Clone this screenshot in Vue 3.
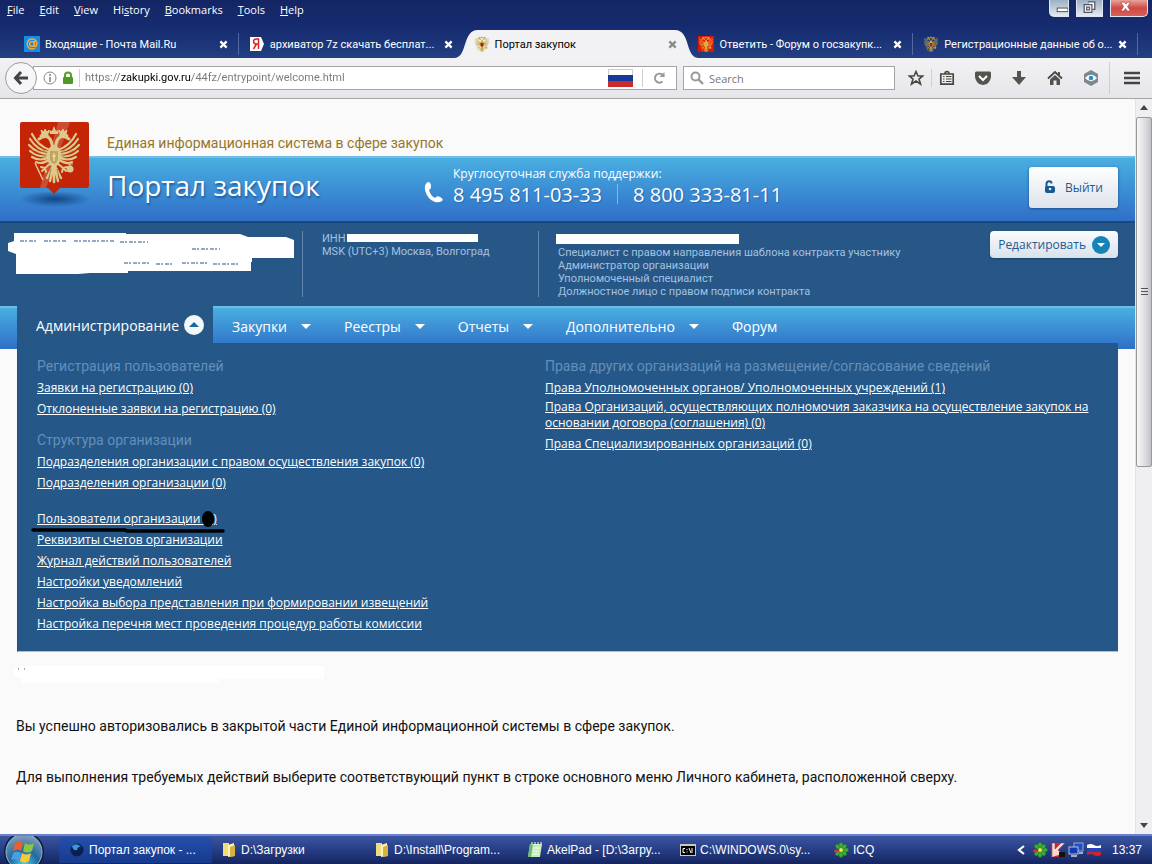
<script setup>
import { ref } from 'vue'

const menus = ['File', 'Edit', 'View', 'History', 'Bookmarks', 'Tools', 'Help']
const accel = [0, 0, 0, 2, 0, 0, 0]
const tabs = [
  { title: 'Входящие - Почта Mail.Ru', icon: 'mail' },
  { title: 'архиватор 7z скачать бесплат...', icon: 'ya' },
  { title: 'Портал закупок', icon: 'eagle', active: true },
  { title: 'Ответить - Форум о госзакупк...', icon: 'redeagle' },
  { title: 'Регистрационные данные об о...', icon: 'eagle' },
]
const nav = ['Закупки', 'Реестры', 'Отчеты', 'Дополнительно']
const registration = ['Заявки на регистрацию (0)', 'Отклоненные заявки на регистрацию (0)']
const structure = ['Подразделения организации с правом осуществления закупок (0)', 'Подразделения организации (0)']
const settings = [
  'Реквизиты счетов организации',
  'Журнал действий пользователей',
  'Настройки уведомлений',
  'Настройка выбора представления при формировании извещений',
  'Настройка перечня мест проведения процедур работы комиссии',
]
const tasks = [
  { title: 'Портал закупок - ...', icon: 'globe', active: true },
  { title: 'D:\\Загрузки', icon: 'folder' },
  { title: 'D:\\Install\\Program...', icon: 'folder' },
  { title: 'AkelPad - [D:\\Загру...', icon: 'note' },
  { title: 'C:\\WINDOWS.0\\sy...', icon: 'cmd' },
  { title: 'ICQ', icon: 'flower' },
]
const url = ref('https://zakupki.gov.ru/44fz/entrypoint/welcome.html')
const query = ref('')
</script>

<template>
  <div class="screen">
    <svg class="defs" aria-hidden="true">
      <defs>
        <g id="eagle-half" fill="none" stroke="currentColor" stroke-linecap="round">
          <path d="M22 24Q10 20 4 8M21 26Q9 24 2 13M21 28Q9 28 1 19M21 30Q10 32 2 25M22 31Q12 36 4 31M22 33Q14 39 8 36" stroke-width="2.2" />
          <path d="M26 25C23 20 25 15 21 12C18 9 14 11 11 13M20 11C19 8 15 8 13 10" stroke-width="3" />
          <path d="M14 8L13 4L16 6L17 3L19 6L21 4L20 8Z" fill="currentColor" stroke-width="1" />
          <path d="M23 37L17 42L13 41M17 42L14 45M17 42L18 46" stroke-width="2" />
          <path d="M26 38L19 52M26 38L22 55M26 38V56" stroke-width="2.4" />
        </g>
        <symbol id="eagle" viewBox="0 0 52 58">
          <use href="#eagle-half" />
          <use href="#eagle-half" transform="matrix(-1 0 0 1 52 0)" />
          <ellipse cx="26" cy="30" rx="7" ry="11" fill="currentColor" />
          <path d="M22 8L21 4L24 5L26 0L28 5L31 4L30 8Z" fill="currentColor" />
          <path d="M22 25H30V32Q30 36 26 38Q22 36 22 32Z" fill="#b59a52" opacity=".75" />
          <path d="M26 27V35M24 30H28" stroke="#f0e3b0" stroke-width="1.2" />
          <path d="M7 37L15 54" stroke="currentColor" stroke-width="1.5" />
          <circle cx="42" cy="43" r="3.5" fill="currentColor" />
          <path d="M42 36V46M39 38H45" stroke="currentColor" stroke-width="1.2" />
          <path d="M11 20L19 27M7 25L18 31M41 20L33 27M45 25L34 31M23 43L21 51M29 43L31 51" stroke="#6b4a18" stroke-width=".7" opacity=".7" />
        </symbol>
        <symbol id="flower" viewBox="0 0 16 16">
          <g fill="#3fae3a" stroke="#1d6f22" stroke-width=".5">
            <ellipse cx="8" cy="3.5" rx="2.2" ry="3" /><ellipse cx="8" cy="12.5" rx="2.2" ry="3" />
            <ellipse cx="12.5" cy="8" rx="3" ry="2.2" /><ellipse cx="11.3" cy="4.7" rx="2.6" ry="2" transform="rotate(-45 11.3 4.7)" />
            <ellipse cx="4.7" cy="4.7" rx="2.6" ry="2" transform="rotate(45 4.7 4.7)" /><ellipse cx="11.3" cy="11.3" rx="2.6" ry="2" transform="rotate(45 11.3 11.3)" />
            <ellipse cx="4.7" cy="11.3" rx="2.6" ry="2" transform="rotate(-45 4.7 11.3)" />
          </g>
          <ellipse cx="3.5" cy="9" rx="2.4" ry="1.6" fill="#e0352b" /><circle cx="8" cy="8" r="2" fill="#f4e344" />
        </symbol>
      </defs>
    </svg>

    <header class="chrome">
      <nav class="menubar">
        <button v-for="(m, i) in menus" :key="m" type="button">{{ m.slice(0, accel[i]) }}<u>{{ m[accel[i]] }}</u>{{ m.slice(accel[i] + 1) }}</button>
      </nav>
      <div class="controls">
        <button type="button" class="min" aria-label="Свернуть"><svg viewBox="0 0 20 17"><rect x="8" y="8" width="12" height="4" fill="#fff" stroke="#444" /></svg></button>
        <button type="button" class="max" aria-label="Развернуть"><svg viewBox="0 0 26 17"><path d="M11.500 1.500H18.500V9.500H16.500M7.500 4.500H15.500V12.500H7.500ZM10 7H13V10H10Z" fill="#fff" stroke="#556" stroke-width="1.300" /></svg></button>
        <button type="button" class="close" aria-label="Закрыть"><svg viewBox="0 0 37 17"><path d="M10 2H14L15.500 4L17 2H20L17 6.500L20 11H16.500L15 8.500L13 11H10L13 6.500Z" fill="#fff" stroke="#a33" stroke-width=".6" /></svg></button>
      </div>
      <div class="tabs">
        <div v-for="t in tabs" :key="t.title" class="tab" :class="{ active: t.active }">
          <svg v-if="t.active" class="shape" viewBox="0 0 246 28" preserveAspectRatio="none" aria-hidden="true"><path d="M0 28C14 28 8 0 24 0H222C238 0 232 28 246 28Z" fill="#f2f2f5" /></svg>
          <svg v-if="t.icon === 'mail'" class="fav" viewBox="0 0 16 16"><rect width="16" height="16" fill="#168de2" /><path d="M10.500 5V9.500Q11 11 12.300 10Q14.200 5 10 3.300Q5 2 3.300 6.500Q2.800 12 7 13Q9 13.300 11 12" fill="none" stroke="#ffa930" stroke-width="1.400" /><circle cx="8" cy="8" r="2.400" fill="none" stroke="#ffa930" stroke-width="1.400" /></svg>
          <svg v-else-if="t.icon === 'ya'" class="fav" viewBox="0 0 16 16"><path d="M1 1H12L15 8L12 15H1Z" fill="#fff" /><path d="M9.500 13V3H7.500Q4.500 3 4.500 5.500Q4.500 8 7.500 8H9.500M7.500 8L4.500 13" fill="none" stroke="#d22" stroke-width="1.500" /></svg>
          <svg v-else class="fav" :class="t.icon" viewBox="0 0 16 16"><use href="#eagle" x="0" y="0" width="16" height="16" /><path v-if="t.icon === 'eagle'" d="M6.500 7H9.500V9Q9 10.500 8 11Q7 10.500 6.500 9Z" fill="#b0201c" /></svg>
          <span class="label">{{ t.title }}</span>
          <button type="button" aria-label="Закрыть вкладку"><svg viewBox="0 0 10 10"><path d="M1.500 1.500L8.500 8.500M8.500 1.500L1.500 8.500" stroke="currentColor" stroke-width="2.500" /></svg></button>
        </div>
      </div>
    </header>

    <div class="toolbar">
      <button type="button" class="back" aria-label="Назад"><svg viewBox="0 0 16 16"><path d="M8 2L2.500 8L8 14M3 8H15" fill="none" stroke="#444" stroke-width="3" /></svg></button>
      <div class="address">
        <svg class="i14" viewBox="0 0 14 14"><circle cx="7" cy="7" r="6" fill="none" stroke="#888" /><path d="M7 6V11M7 3V5" stroke="#777" stroke-width="1.400" /></svg>
        <svg class="lock" viewBox="0 0 12 14"><path d="M3 7V4Q3 1.500 6 1.500Q9 1.500 9 4V7" fill="none" stroke="#58a02c" stroke-width="2" /><rect x="1" y="6" width="10" height="7" rx="1" fill="#4d9a26" /></svg>
        <i class="line"></i>
        <input v-model="url" class="url" type="text" aria-label="Адрес">
        <svg class="flag" viewBox="0 0 25 18"><rect width="25" height="18" fill="#ccc" /><rect x="1" y="1" width="23" height="6" fill="#fff" /><path d="M0 6H25V12H0Z" fill="#163a9c" /><path d="M0 12H25V18H0Z" fill="#cc2b2b" /></svg>
        <i class="line"></i>
        <button type="button" class="reload" aria-label="Обновить"><svg viewBox="0 0 14 14"><path d="M10.500 10.500A4.500 4.500 0 1 1 10.500 3.800L12 5.500" fill="none" stroke="#999" stroke-width="2" /><path d="M12.500 1V6H7.500Z" fill="#999" /></svg></button>
      </div>
      <div class="search">
        <svg class="i14" viewBox="0 0 14 14"><circle cx="5.500" cy="5.500" r="4" fill="none" stroke="#999" stroke-width="2" /><path d="M8.500 8.500L13 13" stroke="#999" stroke-width="2.400" /></svg>
        <input v-model="query" type="text" placeholder="Search" aria-label="Поиск">
      </div>
      <div class="tools">
        <button type="button" aria-label="Закладка"><svg viewBox="0 0 16 16"><path d="M8 1.500L10 6H14.800L11 9L12.500 14L8 11L3.500 14L5 9L1.200 6H6Z" fill="none" stroke="#484840" stroke-width="1.600" /></svg></button>
        <i class="line"></i>
        <button type="button" aria-label="Список"><svg viewBox="0 0 16 16"><path d="M1.800 4H14.200V14.200H1.800ZM6 4Q6 1.500 8 1.500Q10 1.500 10 4" fill="none" stroke="#484840" stroke-width="1.700" /><path d="M4 6.500H5.500M7 6.500H12.500M4 9H5.500M7 9H12.500M4 11.500H5.500M7 11.500H12.500" stroke="#484840" stroke-width="1.200" /></svg></button>
        <button type="button" aria-label="Pocket"><svg viewBox="0 0 16 16"><path d="M1 1.500H15Q16 2 16 3V7Q15 14 8 15Q1 14 0 7V3Q0 2 1 1.500Z" fill="#54544e" /><path d="M4 6L8 10L12 6" fill="none" stroke="#fff" stroke-width="2" /></svg></button>
        <button type="button" aria-label="Загрузки"><svg viewBox="0 0 16 16"><path d="M6 1H10V7H15L8 15L1 7H6Z" fill="#54544e" /></svg></button>
        <button type="button" aria-label="Домой"><svg viewBox="0 0 16 16"><path d="M1 8.500L8 2L15 8.500M12 2V5" fill="none" stroke="#484840" stroke-width="1.800" /><path d="M3 9.500L8 5L13 9.500V15H9.500V10.500H6.500V15H3Z" fill="#54544e" /></svg></button>
        <button type="button" aria-label="Просмотр"><svg viewBox="0 0 16 16"><path d="M8 0L15 4V12L8 16L1 12V4Z" fill="#7d8790" /><path d="M2 8Q8 1.500 14 8Q8 14.500 2 8Z" fill="#fff" /><circle cx="8" cy="8" r="2.300" fill="#2a8fc4" /></svg></button>
      </div>
      <button type="button" class="burger" aria-label="Меню"><svg viewBox="0 0 16 14"><path d="M0 2H16M0 7H16M0 12H16" stroke="#444" stroke-width="2.600" /></svg></button>
    </div>

    <div class="viewport">
      <div class="page">
        <div class="tagline">Единая информационная система в сфере закупок</div>
        <div class="banner">
          <div class="emblem">
            <svg viewBox="0 0 83 86" aria-hidden="true">
              <defs><radialGradient id="shade"><stop offset="0" stop-color="#0b3b78" stop-opacity=".85" /><stop offset="1" stop-color="#0b3b78" stop-opacity="0" /></radialGradient></defs>
              <ellipse cx="41" cy="78" rx="36" ry="8" fill="url(#shade)" />
              <path d="M8 1H73Q75 1 75 3V65Q75 67 73 67H46L40 73L34 67H8Q6 67 6 65V3Q6 1 8 1Z" fill="#c42507" />
              <path d="M44 1H56L32 67H26Z" fill="#fff" opacity=".18" />
              <use href="#eagle" x="13" y="5" width="54" height="58" color="#dcc98c" />
            </svg>
          </div>
          <h1>Портал закупок</h1>
          <div class="support">
            <svg class="phone" viewBox="0 0 20 22" aria-hidden="true"><path d="M4 1Q7 1 7 6Q7 8 5 9Q6 14 11 17Q13 14 16 16Q20 18 18 20Q15 22 11 21Q3 18 1 9Q0 3 4 1Z" fill="#fff" /></svg>
            <div>
              <div class="caption">Круглосуточная служба поддержки:</div>
              <div class="numbers"><span>8 495 811-03-33</span><i></i><span>8 800 333-81-11</span></div>
            </div>
          </div>
          <button type="button" class="exit"><svg viewBox="0 0 12 14" aria-hidden="true"><path d="M2.500 7V3.500Q3 1.200 5 1.200Q7.500 1.200 7.500 3.500" fill="none" stroke="#17588f" stroke-width="2" /><rect x="1" y="6" width="10" height="7" rx="2" fill="#17588f" /><circle cx="6" cy="9" r="1.300" fill="#e8eef4" /></svg>Выйти</button>
        </div>

        <section class="info">
          <div class="org">
            <svg viewBox="0 0 286 44" aria-hidden="true"><path d="M6 2H118V3H232L240 6H278L286 9V27H244V31H243V40H120V42H82L70 43H8V23L0 20V12L6 10Z" fill="#fff" /><path d="M12 10H30M36 10H58M66 10H106M112 11H140M184 18H212M116 32H142M148 33H164M174 32H200M205 33H230" stroke="#255787" stroke-width="1" stroke-dasharray="4 1 2 2" /></svg>
          </div>
          <div class="zone">
            <div>ИНН<span class="mask inn"></span></div>
            <div>MSK (UTC+3) Москва, Волгоград</div>
          </div>
          <div class="roles">
            <div class="mask name"></div>
            <div>Специалист с правом направления шаблона контракта участнику</div>
            <div>Администратор организации</div>
            <div>Уполномоченный специалист</div>
            <div>Должностное лицо с правом подписи контракта</div>
          </div>
          <button type="button" class="edit">Редактировать<svg viewBox="0 0 18 18" aria-hidden="true"><circle cx="9" cy="9" r="9" fill="#1583b8" /><path d="M5 7H13L9 11Z" fill="#fff" /></svg></button>
        </section>

        <nav class="mainnav">
          <button type="button" class="current">Администрирование<svg viewBox="0 0 20 20" aria-hidden="true"><circle cx="10" cy="10" r="10" fill="#f4f8fb" /><path d="M5 12H15L10 7Z" fill="#16699f" /></svg></button>
          <button v-for="n in nav" :key="n" type="button">{{ n }}<svg class="tri" viewBox="0 0 10 5" aria-hidden="true"><path d="M0 0H10L5 5Z" fill="#fff" /></svg></button>
          <button type="button">Форум</button>
        </nav>

        <div class="panel">
          <div class="col">
            <h2>Регистрация пользователей</h2>
            <ul><li v-for="l in registration" :key="l"><a href="#">{{ l }}</a></li></ul>
            <h2>Структура организации</h2>
            <ul><li v-for="l in structure" :key="l"><a href="#">{{ l }}</a></li></ul>
            <ul class="more">
              <li class="marked"><a href="#">Пользователи организации (&nbsp;&nbsp;)</a>
                <svg viewBox="0 0 196 26" aria-hidden="true"><path d="M2 20L94 20L96 21H192" fill="none" stroke="#000" stroke-width="3.500" stroke-linecap="round" /><ellipse cx="177" cy="9" rx="6" ry="8" fill="#000" /></svg>
              </li>
              <li v-for="l in settings" :key="l"><a href="#">{{ l }}</a></li>
            </ul>
          </div>
          <div class="col">
            <h2>Права других организаций на размещение/согласование сведений</h2>
            <ul>
              <li><a href="#">Права Уполномоченных органов/ Уполномоченных учреждений (1)</a></li>
              <li class="tight"><a href="#">Права Организаций, осуществляющих полномочия заказчика на осуществление закупок на основании договора (соглашения) (0)</a></li>
              <li><a href="#">Права Специализированных организаций (0)</a></li>
            </ul>
          </div>
        </div>

        <main class="body">
          <svg class="smudge" viewBox="0 0 312 22" aria-hidden="true"><path d="M8 2H310V15H205V19H8V14L0 12V6Z" fill="#fff" /><path d="M4 5H5M10 5H11" stroke="#555" /></svg>
          <p>Вы успешно авторизовались в закрытой части Единой информационной системы в сфере закупок.</p>
          <p>Для выполнения требуемых действий выберите соответствующий пункт в строке основного меню Личного кабинета, расположенной сверху.</p>
        </main>
      </div>
      <div class="scrollbar" aria-hidden="true">
        <svg viewBox="0 0 8 5"><path d="M0 5H8L4 0Z" fill="#444" /></svg>
        <div class="track"><div class="thumb"><i></i><i></i><i></i></div></div>
        <svg viewBox="0 0 8 5"><path d="M0 0H8L4 5Z" fill="#444" /></svg>
      </div>
    </div>

    <footer class="taskbar">
      <button type="button" class="start" aria-label="Пуск">
        <svg viewBox="0 0 42 42"><defs><radialGradient id="orb" cx=".5" cy=".85" r=".8"><stop offset="0" stop-color="#4fd0f0" /><stop offset=".5" stop-color="#1f6aa0" /><stop offset="1" stop-color="#7f9cb8" /></radialGradient></defs>
          <circle cx="21" cy="21" r="20" fill="#0d1d3c" /><circle cx="21" cy="21" r="18" fill="url(#orb)" stroke="#9ab6d0" />
          <path d="M12 12Q16 9 20 12L18 20Q14 17 10 20Z" fill="#e8602c" /><path d="M22 12Q26 15 31 12L29 20Q24 23 20 20Z" fill="#8cc63e" /><path d="M10 22Q14 19 18 22L16 30Q12 27 8 29Z" fill="#4b9ee0" /><path d="M19 22Q23 25 28 22L26 30Q21 33 17 30Z" fill="#fbc934" />
        </svg>
      </button>
      <div class="tasks">
        <button v-for="t in tasks" :key="t.title" type="button" :class="{ active: t.active }">
          <svg v-if="t.icon === 'globe'" viewBox="0 0 16 16"><circle cx="8" cy="8" r="6.500" fill="#0a2050" /><path d="M3 4Q8 0 12 5Q9 4 8 8Q4 9 3 4Z" fill="#3a9ad8" /></svg>
          <svg v-else-if="t.icon === 'folder'" viewBox="0 0 16 16"><path d="M2 1H8V14H2Z" fill="#f0dc82" /><path d="M7 3L13 1V14L7 15Z" fill="#fdf3b8" /><path d="M9 5L14 3V14L9 15Z" fill="#d9b23e" /></svg>
          <svg v-else-if="t.icon === 'note'" viewBox="0 0 16 16"><path d="M3 2H15L13 15H1Z" fill="#c5ecbc" /><path d="M3 2H6L4 15H1Z" fill="#6fb96c" /><path d="M5 0V3M8 0V3M11 0V3M14 0V3M6 6H13M6 9H12M5 12H12" stroke="#f4fff0" /></svg>
          <svg v-else-if="t.icon === 'cmd'" viewBox="0 0 16 16"><rect y="2" width="16" height="12" fill="#c8c8c8" /><rect x="1" y="4" width="14" height="9" fill="#000" /><path d="M5 6.500H3V10.500H5M7 7V8M7 9.500V10.500M9 6L11 11M12 6V11" fill="none" stroke="#fff" /></svg>
          <svg v-else viewBox="0 0 16 16"><use href="#flower" width="16" height="16" /></svg>
          <span>{{ t.title }}</span>
        </button>
      </div>
      <div class="tray">
        <svg class="chev" viewBox="0 0 8 10"><path d="M7 1L2 5L7 9" fill="none" stroke="#fff" stroke-width="2.200" /></svg>
        <svg viewBox="0 0 16 16"><use href="#flower" width="16" height="16" /></svg>
        <svg viewBox="0 0 16 16"><path d="M1 1H15L9 8L15 15H1Z" fill="#d8252b" /><path d="M2 15V1H5V7L11 1H15L8 8L12 12" fill="#f6dada" stroke="#b01c22" stroke-width=".5" /><path d="M9 10H15V15H9Z" fill="#111" /></svg>
        <svg viewBox="0 0 16 16"><rect x="6" y="1" width="9" height="8" fill="#1f4fd0" stroke="#9ab" /><rect x="1" y="5" width="9" height="7" fill="#1439b4" stroke="#b5c4da" /><path d="M3 14H9M11 11H15" stroke="#aab" stroke-width="2" /></svg>
        <svg viewBox="0 0 16 16"><path d="M1 3Q5 1 8 3T15 3V6H1Z" fill="#fff" /><path d="M1 6H15V10H1Z" fill="#2743b8" /><path d="M1 10H15V13Q11 15 8 13T1 13Z" fill="#d0242b" /></svg>
        <time>13:37</time>
      </div>
    </footer>
  </div>
</template>

<style>
body { margin: 0; }
</style>

<style scoped>
.screen { min-height: 100vh; display: flex; flex-direction: column; background: #fafafa; font-family: "Open Sans", "Noto Sans", sans-serif; font-size: 12px; color: #111; overflow: hidden; box-sizing: border-box; }
.defs { position: absolute; width: 0; height: 0; }
* { box-sizing: border-box; }
svg { display: block; flex: none; }
button { font: inherit; color: inherit; background: none; border: 0; padding: 0; margin: 0; text-align: left; white-space: nowrap; }
input { font: inherit; border: 0; padding: 0; background: none; outline: 0; min-width: 0; }
a { color: inherit; }

.chrome { position: relative; height: 58px; background: linear-gradient(#142563, #162c70 50%, #233f82); color: #fff; display: flex; flex-direction: column; justify-content: space-between; }
.menubar { display: flex; gap: 15px; padding-left: 7px; font-size: 11px; line-height: 20px; }
.controls { position: absolute; top: 0; right: 4px; display: flex; gap: 7px; height: 17px; }
.controls button { height: 17px; border: 1px solid #dfe6f2; border-top: 0; background: linear-gradient(#9db0c4, #e4ebf0); overflow: hidden; }
.controls svg { width: 100%; height: 17px; }
.controls .min { width: 20px; border-radius: 0 0 0 5px; }
.controls .max { width: 27px; }
.controls .close { width: 38px; border-radius: 0 0 5px 0; background: linear-gradient(#e8a39b, #cf4a44 50%, #d9605a); }
.tabs { display: flex; padding: 0 14px; height: 28px; }
.tab { position: relative; flex: 1; min-width: 0; display: flex; align-items: center; gap: 5px; padding: 0 11px 0 10px; font-family: Roboto, sans-serif; font-size: 11px; }
.tab::after { content: ""; position: absolute; right: 0; top: 3px; height: 22px; width: 1px; background: #53689f; }
.tab.active::after, .tab:nth-child(2)::after { display: none; }
.tab.active { color: #000; }
.tab > * { position: relative; }
.tab .shape { position: absolute; left: -10px; top: 0; width: calc(100% + 20px); height: 28px; }
.fav { width: 16px; height: 16px; color: #c6a83c; }
.fav.redeagle { background: #d8160c; color: #f0b43a; }
.label { flex: 1; min-width: 0; white-space: nowrap; }
.tab button svg { width: 9px; height: 9px; }
.tab.active button { color: #888; }

.toolbar { height: 41px; display: flex; align-items: center; background: linear-gradient(#f2f2f5, #e6e6ea); border-bottom: 1px solid #a6a6aa; padding: 0 12px 0 5px; }
.back { width: 32px; height: 32px; border-radius: 50%; border: 1px solid #9c9ca0; background: #f6f6f8; display: grid; place-items: center; position: relative; }
.back svg { width: 16px; height: 16px; }
.address, .search { display: flex; align-items: center; height: 24px; background: #fff; border: 1px solid #a3a3a8; }
.address { flex: 1; margin-left: -4px; padding-left: 9px; gap: 5px; }
.i14 { width: 14px; height: 14px; }
.lock { width: 12px; height: 14px; }
.line { width: 1px; height: 18px; background: #cfcfd3; }
.url { flex: 1; font-family: Roboto, sans-serif; font-size: 11px; line-height: 20px; background: linear-gradient(90deg, #777 36px, #000 36px, #000 106px, #777 106px); -webkit-background-clip: text; background-clip: text; -webkit-text-fill-color: transparent; }
.flag { width: 25px; height: 18px; margin-right: 4px; }
.reload { padding: 0 10px 0 4px; }
.reload svg { width: 14px; height: 14px; }
.search { width: 212px; margin-left: 6px; padding-left: 6px; gap: 5px; font-size: 11px; }
.search input { flex: 1; }
.search input::placeholder { color: #777; opacity: 1; }
.tools { display: flex; align-items: center; margin-left: 13px; gap: 20px; }
.tools svg { width: 16px; height: 16px; }
.tools .line { margin: 0 -13px; }
.burger { margin-left: 10px; padding-left: 14px; height: 32px; border-left: 1px solid #cfcfd3; }
.burger svg { width: 16px; height: 14px; }

.viewport { flex: 1; display: flex; }
.page { flex: 1; min-width: 0; display: flex; flex-direction: column; }
.tagline { height: 57px; padding: 34px 0 0 107px; font-family: Roboto, sans-serif; font-size: 14px; line-height: 20px; color: #96762a; }
.banner { height: 65px; display: flex; align-items: center; padding: 0 17px 5px 107px; position: relative; color: #fff; background: linear-gradient(#49aee0, #2f6fc8); border-top: 2px solid #71bde8; }
.emblem { position: absolute; left: 14px; top: -37px; width: 76px; }
.emblem svg { width: 83px; height: 86px; }
h1 { margin: 0 0 4px; width: 317px; font-size: 28px; line-height: 36px; font-weight: 400; text-shadow: 1px 2px 2px #205a9a; }
.support { display: flex; align-items: center; gap: 9px; margin-bottom: 3px; }
.phone { width: 20px; height: 22px; margin-top: 12px; }
.caption { line-height: 17px; font-size: 12px; }
.numbers { display: flex; align-items: center; gap: 15px; font-size: 20px; line-height: 25px; text-shadow: 1px 1px 1px #2968ab; white-space: nowrap; }
.numbers i { width: 1px; height: 20px; background: #7db8e8; }
.exit { margin-left: auto; width: 89px; height: 41px; display: flex; align-items: center; gap: 9px; padding-left: 15px; border-radius: 3px; background: linear-gradient(#fff, #dce3ea); box-shadow: 0 1px 3px #1d4f8c; color: #1d5b93; font-size: 12px; }
.exit svg { width: 12px; height: 14px; }
.info { position: relative; height: 85px; display: grid; grid-template-columns: 302px 236px 1fr auto; background: #265787; border-top: 2px solid #184a80; padding: 8px 17px 8px 0; font-size: 11px; line-height: 13px; color: #a4c2e0; }
.org svg { width: 286px; height: 44px; margin-left: 8px; }
.zone, .roles { border-left: 1px solid #6187b0; padding: 1px 0 0 19px; white-space: nowrap; height: 66px; font-family: Roboto, sans-serif; }
.mask { display: block; background: #fff; }
.mask.inn { display: inline-block; width: 131px; height: 8px; margin-left: 1px; }
.mask.name { width: 183px; height: 10px; margin: 2px 0 2px -2px; }
.edit { height: 27px; display: flex; align-items: center; gap: 6px; padding: 0 8px; border-radius: 4px; background: linear-gradient(#fbfcfd, #d8e1ea); box-shadow: 0 1px 2px #173f6b; color: #205c92; font-size: 12px; }
.edit svg { width: 18px; height: 18px; }
.mainnav { height: 43px; display: flex; align-items: center; padding: 0 17px 5px; border-top: 2px solid #6dbce6; background: linear-gradient(#49aee0, #2f6fc8); color: #fff; font-size: 14px; }
.mainnav button { display: flex; align-items: center; gap: 14px; padding: 0 14px 0 19px; height: 36px; }
.mainnav button.current { background: #265787; gap: 5px; padding-right: 9px; height: 38px; margin-top: -2px; }
.mainnav .current svg { width: 20px; height: 20px; }
.tri { width: 10px; height: 5px; }
.panel { position: relative; margin: -6px 17px 0; background: #255888; border-left: 1px solid #1d4f80; border-bottom: 1px solid #9cc4e0; color: #fff; display: grid; grid-template-columns: 508px minmax(0, 560px); padding: 12px 0 17px 19px; font-size: 12px; }
h2 { margin: 0; font-family: Roboto, sans-serif; font-size: 14px; font-weight: 400; line-height: 22px; color: #648fbb; }
ul { list-style: none; margin: 0 0 10px; padding: 0; }
ul.more { margin: 15px 0 0; }
ul:has(+ .more) { margin: 0; }
li { padding: 3px 0 2px; line-height: 16px; }
li.tight { padding-top: 1px; }
.marked { position: relative; }
.marked svg { position: absolute; left: -6px; top: 2px; width: 196px; height: 26px; }
.body { padding: 12px 16px 10px; font-family: Roboto, sans-serif; font-size: 14px; }
.smudge { width: 312px; height: 22px; margin-left: -2px; }
.body p { margin: 30px 0 0; line-height: 20px; }
.body p + p { margin-top: 31px; }
.scrollbar { width: 17px; display: flex; flex-direction: column; align-items: center; padding: 6px 0; background: #efeff1; border-left: 1px solid #e4e4e4; }
.scrollbar > svg { width: 8px; height: 5px; }
.track { flex: 1; width: 100%; padding: 7px 0; }
.thumb { height: 50%; border: 1px solid #999; border-radius: 2px; background: linear-gradient(90deg, #f6f6f6, #dcdce0 60%, #c2c2c6); display: flex; flex-direction: column; gap: 2px; align-items: center; justify-content: center; }
.thumb i { width: 7px; height: 1px; background: #555; }

.taskbar { height: 30px; display: flex; align-items: center; color: #fff; background: linear-gradient(#3a55a0, #22397f 60%, #16245f); border-top: 2px solid #6d80cf; font-family: "Liberation Sans", sans-serif; font-size: 12px; overflow: hidden; }
.start { flex: none; width: 59px; height: 28px; padding-left: 3px; }
.start svg { width: 42px; height: 42px; margin-top: -5px; }
.tasks { flex: 1; min-width: 0; display: flex; }
.tasks button { flex: 0 1 153px; height: 26px; display: flex; align-items: center; gap: 4px; padding-left: 9px; overflow: hidden; }
.tasks button.active { background: linear-gradient(#2350ac, #163a8c); border-radius: 2px; padding-left: 10px; }
.tasks svg { width: 16px; height: 16px; }
.tray { display: flex; align-items: center; gap: 2px; padding-right: 10px; }
.tray svg { width: 16px; height: 16px; }
.tray .chev { width: 8px; height: 10px; margin-right: 5px; }
.tray time { margin-left: 8px; }
</style>
